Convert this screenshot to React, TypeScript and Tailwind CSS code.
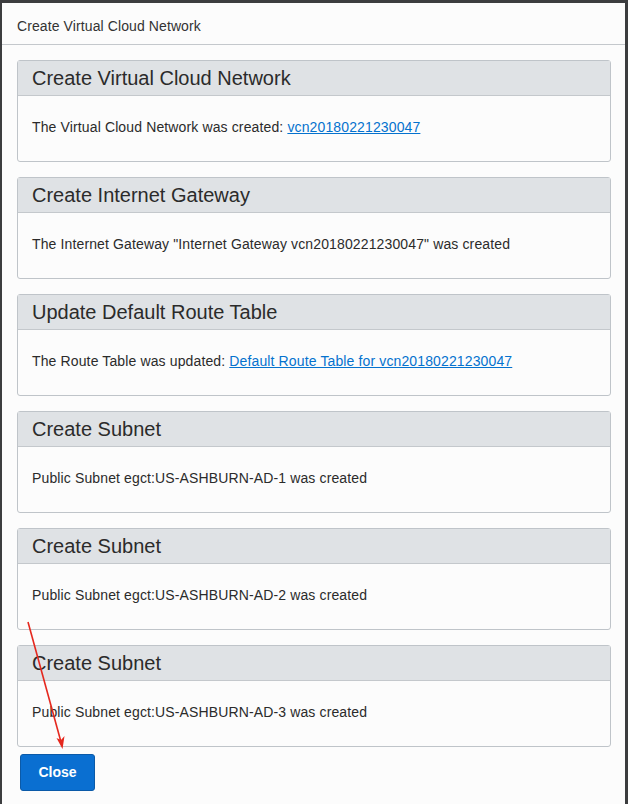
const steps = [
  {
    title: "Create Virtual Cloud Network",
    text: "The Virtual Cloud Network was created: ",
    link: "vcn20180221230047",
  },
  {
    title: "Create Internet Gateway",
    text: 'The Internet Gateway "Internet Gateway vcn20180221230047" was created',
  },
  {
    title: "Update Default Route Table",
    text: "The Route Table was updated: ",
    link: "Default Route Table for vcn20180221230047",
  },
  { title: "Create Subnet", text: "Public Subnet egct:US-ASHBURN-AD-1 was created" },
  { title: "Create Subnet", text: "Public Subnet egct:US-ASHBURN-AD-2 was created" },
  { title: "Create Subnet", text: "Public Subnet egct:US-ASHBURN-AD-3 was created" },
];

const StepPanel = ({ title, text, link }: { title: string; text: string; link?: string }) => (
  <div className="rounded-[3px] border border-[#bfc4c9] bg-[#fcfcfc]">
    <div className="h-[35px] border-b border-[#c4c8cc] bg-[#dfe2e5] pl-[14px] text-[20px] leading-[34px] text-[#2b2b2b]">
      {title}
    </div>
    <div className="h-[65px] pl-[14px] pt-[21px] text-[14px] leading-5 tracking-[0.13px] text-[#2b2b2b]">
      {text}
      {link && (
        <a href="#" className="text-[#0572ce] underline">
          {link}
        </a>
      )}
    </div>
  </div>
);

export default function App() {
  return (
    <div
      className="relative h-[804px] w-[628px] overflow-hidden bg-[#3c3d3f] pl-[2px] pr-[3px] pt-[3px]"
      style={{ fontFamily: '"Liberation Sans", Arial, sans-serif' }}
    >
      <div className="h-full bg-[#fcfcfc]">
        <div className="h-[42px] border-b border-[#c4c8cc] pl-[15px] text-[14px] leading-[47px] tracking-[0.1px] text-[#333]">
          Create Virtual Cloud Network
        </div>
        <div className="flex flex-col gap-[15px] pl-[15px] pr-[14px] pt-[15px]">
          {steps.map((s, i) => (
            <StepPanel key={i} {...s} />
          ))}
        </div>
        <div className="pl-[18px] pt-[7px]">
          <button className="h-[37px] w-[75px] rounded-[3px] border border-[#0b5aa8] bg-[#0a6fd1] text-[14px] font-bold text-white">
            Close
          </button>
        </div>
      </div>

      <svg className="absolute left-0 top-0" width="628" height="804" viewBox="0 0 628 804">
        <line x1="28" y1="622" x2="61" y2="742" stroke="#e5281e" strokeWidth="1.6" />
        <path d="M62.5 749 L56.5 738 L61 740 L64.5 736 Z" fill="#e5281e" />
      </svg>
    </div>
  );
}
